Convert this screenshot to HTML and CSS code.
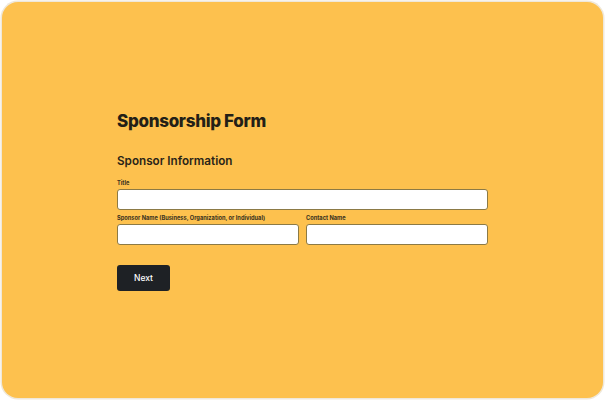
FILE: index.html
```html
<!DOCTYPE html>
<html>
<head>
<meta charset="utf-8">
<link rel="stylesheet" href="styles.css">
</head>
<body>
<div class="card">
  <form class="form">
    <h1 class="title">Sponsorship Form</h1>
    <h2 class="section">Sponsor Information</h2>
    <div class="field">
      <label class="label">Title</label>
      <div class="input"></div>
    </div>
    <div class="row">
      <div class="field">
        <label class="label">Sponsor Name (Business, Organization, or Individual)</label>
        <div class="input"></div>
      </div>
      <div class="field">
        <label class="label">Contact Name</label>
        <div class="input"></div>
      </div>
    </div>
    <div class="actions">
      <button type="button" class="btn">Next</button>
    </div>
  </form>
</div>
</body>
</html>
```

FILE: styles.css
```css
* { box-sizing: border-box; }
html, body { margin: 0; padding: 0; background: #ffffff; }
body {
  width: 605px;
  height: 400px;
  padding: 2px;
  font-family: "Inter", "Liberation Sans", sans-serif;
  color: #24201a;
}
.card {
  width: 601px;
  height: 396px;
  background: #fdc14e;
  border-radius: 16px;
  box-shadow: 0 0 0 1.5px #efe8da;
  padding: 107px 0 0 115px;
}
.form {
  width: 371px;
  display: flex;
  flex-direction: column;
}
.title {
  margin: 0;
  font-size: 17px;
  font-weight: 800;
  line-height: 24px;
  letter-spacing: -0.3px;
  color: #231f17;
}
.section {
  margin: 19px 0 0 0;
  font-size: 11.7px;
  font-weight: 600;
  line-height: 18px;
  color: #2a2518;
}
.field {
  display: flex;
  flex-direction: column;
  flex: 1;
  min-width: 0;
}
.form > .field { margin-top: 9px; }
.label {
  font-size: 5.7px;
  font-weight: 700;
  line-height: 8px;
  color: #3a3220;
  margin-bottom: 2px;
  white-space: nowrap;
}
.input {
  height: 21px;
  background: #ffffff;
  border: 1px solid #8c7a45;
  border-radius: 3px;
}
.row {
  display: flex;
  gap: 7px;
  margin-top: 4px;
}
.actions { margin-top: 20px; }
.btn {
  width: 53px;
  height: 26px;
  background: #1e2125;
  color: #ffffff;
  border: none;
  border-radius: 3px;
  font-family: "Inter", "Liberation Sans", sans-serif;
  font-size: 8.5px;
  font-weight: 500;
  padding: 0;
}
```
